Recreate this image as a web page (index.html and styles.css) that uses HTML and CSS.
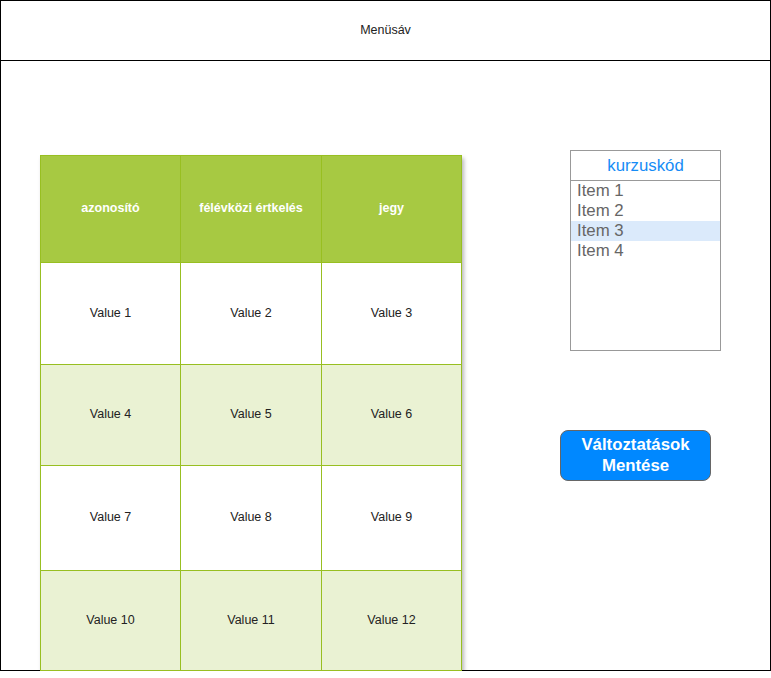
FILE: index.html
```html
<!DOCTYPE html>
<html>
<head>
<meta charset="utf-8">
<link rel="stylesheet" href="styles.css">
</head>
<body>
<div class="frame">
  <div class="menubar">Menüsáv</div>
  <div class="main">
    <div class="grid">
      <div class="cell head">azonosító</div>
      <div class="cell head">félévközi értkelés</div>
      <div class="cell head">jegy</div>
      <div class="cell r1">Value 1</div>
      <div class="cell r1">Value 2</div>
      <div class="cell r1">Value 3</div>
      <div class="cell r2 alt">Value 4</div>
      <div class="cell r2 alt">Value 5</div>
      <div class="cell r2 alt">Value 6</div>
      <div class="cell r3">Value 7</div>
      <div class="cell r3">Value 8</div>
      <div class="cell r3">Value 9</div>
      <div class="cell r4 alt">Value 10</div>
      <div class="cell r4 alt">Value 11</div>
      <div class="cell r4 alt">Value 12</div>
    </div>
    <div class="side">
      <div class="list">
        <div class="list-head">kurzuskód</div>
        <div class="item">Item 1</div>
        <div class="item">Item 2</div>
        <div class="item selected">Item 3</div>
        <div class="item">Item 4</div>
      </div>
      <div class="button">Változtatások<br>Mentése</div>
    </div>
  </div>
</div>
</body>
</html>
```
FILE: styles.css
```css
html, body {
  margin: 0;
  padding: 0;
  background: #fff;
}
body {
  font-family: "Liberation Sans", Arial, sans-serif;
}
.frame {
  box-sizing: border-box;
  width: 771px;
  height: 671px;
  border: 1px solid #000;
  display: flex;
  flex-direction: column;
}
.menubar {
  box-sizing: border-box;
  height: 60px;
  padding-bottom: 2px;
  border-bottom: 1px solid #000;
  display: flex;
  align-items: center;
  justify-content: center;
  font-size: 12.5px;
  color: #222;
  flex: none;
}
.main {
  flex: 1;
  display: flex;
  align-items: flex-start;
}
.grid {
  position: relative;
  z-index: 1;
  margin-top: 94px;
  margin-left: 39px;
  display: grid;
  grid-template-columns: 140px 141px 140px;
  grid-template-rows: 107px 102px 101px 105px 100px;
  border-left: 1px solid #98bf21;
  border-top: 1px solid #98bf21;
  box-shadow: 2px 3px 4px rgba(0, 0, 0, 0.28);
  background: #fff;
}
.cell {
  box-sizing: border-box;
  padding-bottom: 2px;
  border-right: 1px solid #98bf21;
  border-bottom: 1px solid #98bf21;
  display: flex;
  align-items: center;
  justify-content: center;
  font-size: 12.5px;
  color: #222;
}
.head {
  background: #a7c942;
  color: #fff;
  font-weight: bold;
}
.alt {
  background: #eaf2d3;
}
.side {
  margin-left: 98px;
  margin-top: 89px;
  display: flex;
  flex-direction: column;
  align-items: flex-start;
}
.list {
  margin-left: 10px;
  box-sizing: border-box;
  width: 151px;
  height: 201px;
  border: 1px solid #999;
}
.list-head {
  height: 29px;
  border-bottom: 1px solid #999;
  color: #168cf6;
  font-size: 16.8px;
  display: flex;
  align-items: center;
  justify-content: center;
}
.item {
  height: 20px;
  line-height: 20px;
  padding-left: 6px;
  font-size: 16.8px;
  color: #666;
}
.item.selected {
  background: #dbeafb;
}
.button {
  margin-top: 79px;
  box-sizing: border-box;
  width: 151px;
  height: 51px;
  padding-bottom: 2px;
  border: 1px solid #666;
  border-radius: 8px;
  background: #0088ff;
  color: #fff;
  font-weight: bold;
  font-size: 16.8px;
  line-height: 21px;
  text-align: center;
  display: flex;
  align-items: center;
  justify-content: center;
}
```
